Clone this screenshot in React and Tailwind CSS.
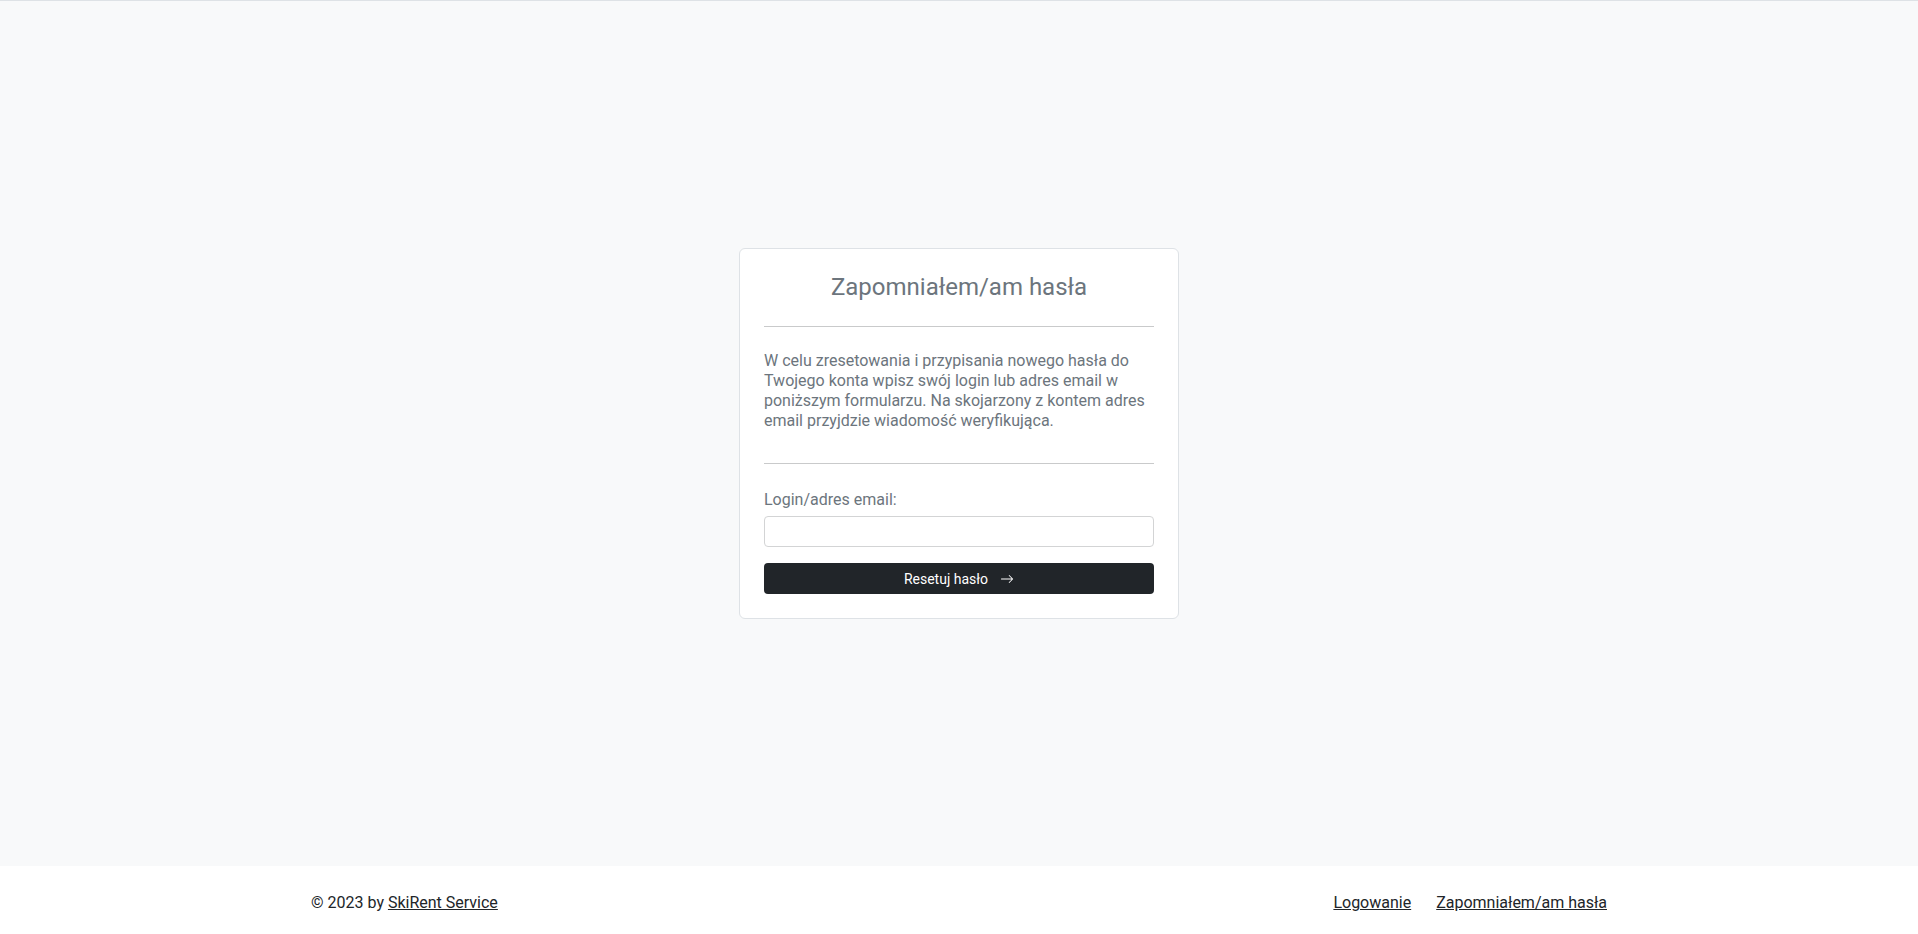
import React, { useState } from 'react';

function ArrowIcon() {
  return (
    <svg width="14" height="14" viewBox="0 0 16 16" fill="currentColor" aria-hidden="true">
      <path
        fillRule="evenodd"
        d="M1 8a.5.5 0 0 1 .5-.5h11.793l-3.147-3.146a.5.5 0 0 1 .708-.708l4 4a.5.5 0 0 1 0 .708l-4 4a.5.5 0 0 1-.708-.708L13.293 8.5H1.5A.5.5 0 0 1 1 8"
      />
    </svg>
  );
}

function ResetCard() {
  const [login, setLogin] = useState('');

  return (
    <div className="w-[440px] bg-white border border-[#dee2e6] rounded-md p-6 text-[#6c757d]">
      <h4 className="text-center text-[24px] leading-[29px]">Zapomniałem/am hasła</h4>
      <hr className="my-6 border-t border-[#c9cacb]" />
      <p className="text-[16px] leading-[20px]">
        W celu zresetowania i przypisania nowego hasła do Twojego konta wpisz swój login lub adres
        email w poniższym formularzu. Na skojarzony z kontem adres email przyjdzie wiadomość
        weryfikująca.
      </p>
      <hr className="mt-8 mb-6 border-t border-[#c9cacb]" />
      <form onSubmit={(e) => e.preventDefault()}>
        <label htmlFor="login" className="block text-[16px] leading-[24px] mb-1">
          Login/adres email:
        </label>
        <input
          id="login"
          type="text"
          value={login}
          onChange={(e) => setLogin(e.target.value)}
          className="block w-full h-[31px] px-2 text-sm text-[#212529] bg-white border border-[#d3d4d5] rounded outline-none"
        />
        <button
          type="submit"
          className="mt-4 w-full h-[31px] flex items-center justify-center gap-3 bg-[#212529] text-white text-sm rounded"
        >
          <span>Resetuj hasło</span>
          <ArrowIcon />
        </button>
      </form>
    </div>
  );
}

export default function App() {
  return (
    <div
      className="min-h-screen flex flex-col bg-[#f8f9fa] border-t border-[#dee2e6]"
      style={{ fontFamily: 'Roboto, "Noto Sans", sans-serif' }}
    >
      <main className="flex-1 flex items-center justify-center">
        <ResetCard />
      </main>
      <footer className="h-[68px] bg-white pt-[25px]">
        <div className="w-[1296px] mx-auto flex items-center justify-between text-[16px] leading-[24px] text-[#212529]">
          <p>
            © 2023 by{' '}
            <a href="#" className="underline">
              SkiRent Service
            </a>
          </p>
          <nav className="flex gap-[25px]">
            <a href="#" className="underline">
              Logowanie
            </a>
            <a href="#" className="underline">
              Zapomniałem/am hasła
            </a>
          </nav>
        </div>
      </footer>
    </div>
  );
}
